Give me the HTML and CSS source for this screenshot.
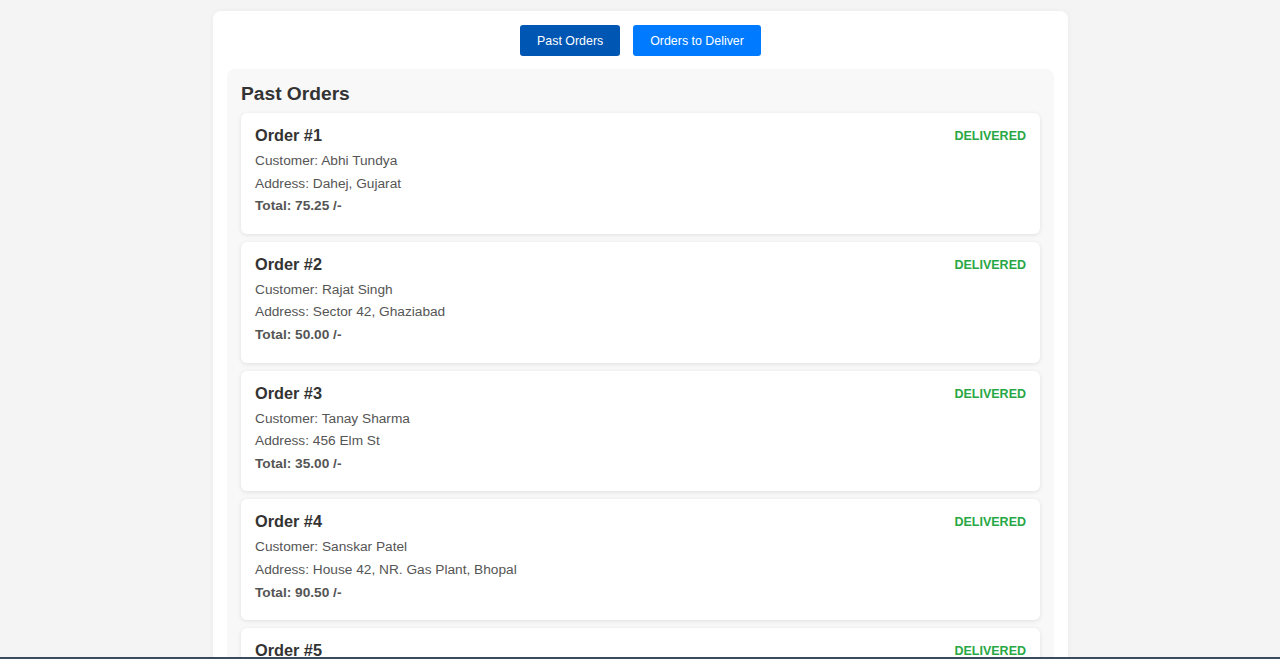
FILE: index.html
```html
<!DOCTYPE html>
<html lang="en">
<head>
<meta charset="utf-8">
<title>Orders</title>
<link rel="stylesheet" href="styles.css">
</head>
<body>
<div class="container">
  <div class="tabs">
    <button class="tab active">Past Orders</button>
    <button class="tab">Orders to Deliver</button>
  </div>
  <section class="section">
    <h2 class="section-title">Past Orders</h2>
    <div class="card">
      <div class="card-info">
        <h3 class="order-id">Order #1</h3>
        <p class="line">Customer: Abhi Tundya</p>
        <p class="line">Address: Dahej, Gujarat</p>
        <p class="line total">Total: 75.25 /-</p>
      </div>
      <span class="status">DELIVERED</span>
    </div>
    <div class="card">
      <div class="card-info">
        <h3 class="order-id">Order #2</h3>
        <p class="line">Customer: Rajat Singh</p>
        <p class="line">Address: Sector 42, Ghaziabad</p>
        <p class="line total">Total: 50.00 /-</p>
      </div>
      <span class="status">DELIVERED</span>
    </div>
    <div class="card">
      <div class="card-info">
        <h3 class="order-id">Order #3</h3>
        <p class="line">Customer: Tanay Sharma</p>
        <p class="line">Address: 456 Elm St</p>
        <p class="line total">Total: 35.00 /-</p>
      </div>
      <span class="status">DELIVERED</span>
    </div>
    <div class="card">
      <div class="card-info">
        <h3 class="order-id">Order #4</h3>
        <p class="line">Customer: Sanskar Patel</p>
        <p class="line">Address: House 42, NR. Gas Plant, Bhopal</p>
        <p class="line total">Total: 90.50 /-</p>
      </div>
      <span class="status">DELIVERED</span>
    </div>
    <div class="card">
      <div class="card-info">
        <h3 class="order-id">Order #5</h3>
        <p class="line">Customer: Riya Mehta</p>
        <p class="line">Address: MG Road, Pune</p>
        <p class="line total">Total: 42.00 /-</p>
      </div>
      <span class="status">DELIVERED</span>
    </div>
  </section>
</div>
<div class="window-edge"></div>
</body>
</html>
```

FILE: styles.css
```css
* { box-sizing: border-box; }
html, body {
  margin: 0;
  padding: 0;
  background: #f4f4f4;
  font-family: "Liberation Sans", Arial, sans-serif;
  color: #333;
}
.container {
  width: 855px;
  margin: 11px 0 0 calc(50% - 427px);
  background: #fff;
  border-radius: 8px;
  padding: 14px 14px 14px;
  box-shadow: 0 0 6px rgba(0,0,0,0.04);
}
.tabs {
  display: flex;
  justify-content: center;
  gap: 13px;
  margin-bottom: 13px;
}
.tab {
  font-family: "Liberation Sans", Arial, sans-serif;
  font-size: 12.4px;
  color: #fff;
  background: #007bff;
  border: none;
  border-radius: 3px;
  height: 31px;
  padding: 0 17px;
  cursor: pointer;
}
.tab.active { background: #0056b3; }
.section {
  background: #f8f8f8;
  border-radius: 8px;
  padding: 13px 14px 14px;
}
.section-title {
  font-size: 19.2px;
  font-weight: bold;
  margin: 0 0 7px;
  line-height: 24px;
}
.card {
  background: #fff;
  border-radius: 6px;
  box-shadow: 0 1px 4px rgba(0,0,0,0.1);
  padding: 13px 14px 16px;
  margin-bottom: 8px;
  display: flex;
  justify-content: space-between;
  align-items: flex-start;
}
.order-id {
  font-size: 16.3px;
  font-weight: bold;
  margin: 0 0 6px;
  line-height: 18px;
}
.line {
  font-size: 13.7px;
  margin: 0;
  line-height: 22.6px;
  color: #555;
}
.line.total { font-weight: bold; }
.status {
  font-size: 12.5px;
  font-weight: bold;
  color: #28a745;
  margin-top: 3px;
}
.window-edge {
  position: fixed;
  left: 0;
  right: 0;
  bottom: 0;
  height: 2px;
  background: #3b4b5e;
}
```
